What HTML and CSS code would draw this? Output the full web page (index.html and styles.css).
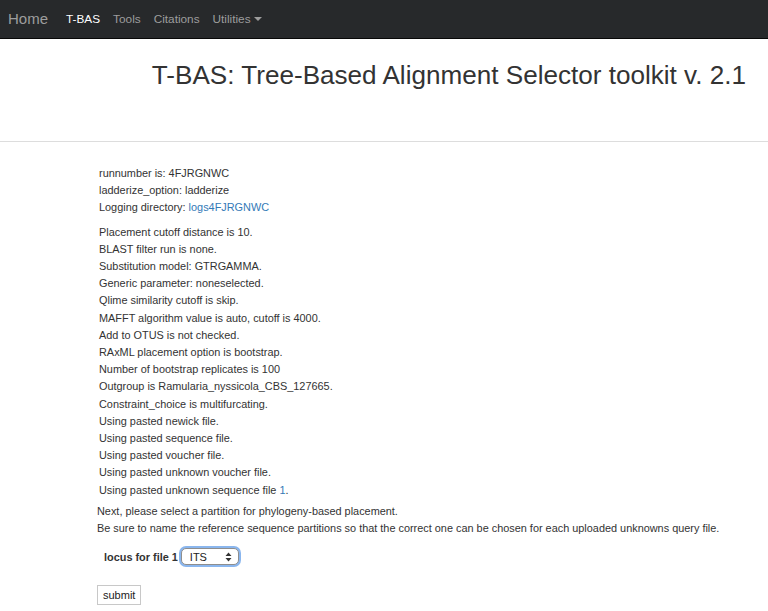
FILE: index.html
```html
<!DOCTYPE html>
<html>
<head>
<meta charset="utf-8">
<title>T-BAS</title>
<link rel="stylesheet" href="styles.css">
</head>
<body>
<nav class="navbar">
  <a class="brand" href="#">Home</a>
  <ul class="nav">
    <li><a class="active" href="#">T-BAS</a></li>
    <li><a href="#">Tools</a></li>
    <li><a href="#">Citations</a></li>
    <li><a href="#">Utilities <span class="caret"></span></a></li>
  </ul>
</nav>
<header class="page-header">
  <h1>T-BAS: Tree-Based Alignment Selector toolkit v. 2.1</h1>
</header>
<hr class="rule">
<main class="content">
  <div class="group first">
    <p>runnumber is: 4FJRGNWC</p>
    <p>ladderize_option: ladderize</p>
    <p>Logging directory: <a href="#">logs4FJRGNWC</a></p>
  </div>
  <div class="group">
    <p>Placement cutoff distance is 10.</p>
    <p>BLAST filter run is none.</p>
    <p>Substitution model: GTRGAMMA.</p>
    <p>Generic parameter: noneselected.</p>
    <p>Qlime similarity cutoff is skip.</p>
    <p>MAFFT algorithm value is auto, cutoff is 4000.</p>
    <p>Add to OTUS is not checked.</p>
    <p>RAxML placement option is bootstrap.</p>
    <p>Number of bootstrap replicates is 100</p>
    <p>Outgroup is Ramularia_nyssicola_CBS_127665.</p>
    <p>Constraint_choice is multifurcating.</p>
    <p>Using pasted newick file.</p>
    <p>Using pasted sequence file.</p>
    <p>Using pasted voucher file.</p>
    <p>Using pasted unknown voucher file.</p>
    <p>Using pasted unknown sequence file <a href="#">1</a>.</p>
  </div>
  <div class="notes">
    <p>Next, please select a partition for phylogeny-based placement.</p>
    <p>Be sure to name the reference sequence partitions so that the correct one can be chosen for each uploaded unknowns query file.</p>
  </div>
  <form class="form">
    <div class="field">
      <label class="label" for="locus">locus for file 1</label>
      <span class="select-wrap">
        <select id="locus" class="select"><option>ITS</option></select>
        <svg class="arrows" width="7" height="10" viewBox="0 0 7 10"><path d="M3.5 0.5 L6.5 4 L0.5 4 Z M3.5 9.5 L6.5 6 L0.5 6 Z" fill="#333"/></svg>
      </span>
    </div>
    <button type="button" class="submit">submit</button>
  </form>
</main>
</body>
</html>
```
FILE: styles.css
```css
html, body {
  margin: 0;
  padding: 0;
  background: #fff;
}
body {
  font-family: "Liberation Sans", Arial, sans-serif;
  font-size: 10.9px;
  color: #333;
}
a {
  color: #337ab7;
  text-decoration: none;
}
.navbar {
  display: flex;
  align-items: center;
  height: 37px;
  padding-bottom: 1px;
  background: #27292b;
  border-bottom: 1px solid #080808;
  padding-left: 8px;
}
.brand {
  color: #9d9d9d;
  font-size: 15px;
  margin-right: 18px;
}
.nav {
  display: flex;
  gap: 13px;
  list-style: none;
  margin: 0;
  padding: 0;
}
.nav a {
  color: #9d9d9d;
  font-size: 11.8px;
}
.nav a.active {
  color: #fff;
}
.caret {
  display: inline-block;
  width: 0;
  height: 0;
  border-top: 4px solid #9d9d9d;
  border-left: 4px solid transparent;
  border-right: 4px solid transparent;
  vertical-align: middle;
  margin-left: 0;
}
.page-header {
  display: flex;
  justify-content: flex-end;
  padding: 0 22px 0 0;
}
.page-header h1 {
  font-weight: normal;
  font-size: 26.1px;
  line-height: 33px;
  margin: 20px 0 0 0;
  color: #333;
}
.rule {
  border: 0;
  border-top: 1px solid #ddd;
  margin: 49px 0 0 0;
}
.content {
  padding: 23px 0 20px 97px;
}
.content p {
  margin: 0;
  line-height: 17.2px;
}
.group {
  padding-left: 2px;
}
.group + .group {
  margin-top: 7px;
}
.notes {
  margin-top: 4px;
}
.form {
  margin-top: 11px;
}
.field {
  display: flex;
  align-items: center;
  padding-left: 7px;
}
.label {
  font-weight: bold;
  margin-right: 3px;
}
.select-wrap {
  position: relative;
  display: inline-block;
}
.select {
  appearance: none;
  -webkit-appearance: none;
  width: 58px;
  height: 17px;
  padding: 0 0 0 8px;
  font-family: "Liberation Sans", Arial, sans-serif;
  font-size: 11px;
  color: #222;
  background: #fff;
  border: 1px solid #8e8e8e;
  border-radius: 5px;
  box-shadow: 0 0 0 2px #8ab6ee;
  outline: none;
}
.arrows {
  position: absolute;
  right: 7px;
  top: 4px;
  pointer-events: none;
}
.submit {
  margin-top: 20px;
  font-family: "Liberation Sans", Arial, sans-serif;
  font-size: 11px;
  color: #222;
  background: #fff;
  border: 1px solid #c8c8c8;
  border-radius: 0;
  padding: 0 5px;
  height: 20px;
}
```
